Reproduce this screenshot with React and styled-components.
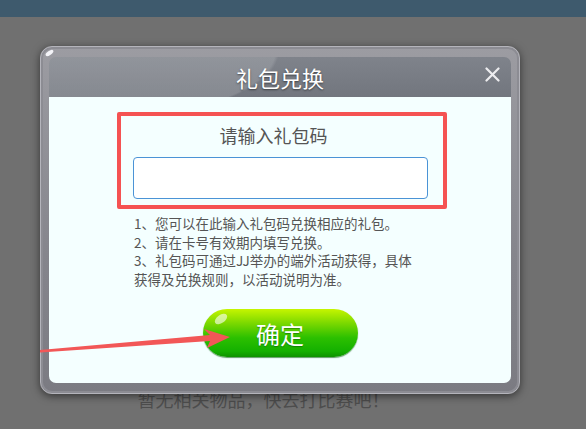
import React, { useState } from 'react';
import styled, { createGlobalStyle } from 'styled-components';

const GlobalStyle = createGlobalStyle`
  html, body {
    margin: 0;
    padding: 0;
    background: #707070;
  }
  body {
    font-family: "Noto Sans CJK SC", "Noto Sans", "Liberation Sans", sans-serif;
  }
`;

function GiftCodeDialog() {
  const [code, setCode] = useState('');

  return (
    <StPage>
      <StTopBar />
      <StEmptyText>暂无相关物品，快去打比赛吧！</StEmptyText>

      <StOverlay>
        <StFrame>
          <StHeader>
            <StTitle>礼包兑换</StTitle>
            <StClose aria-label="close">
              <svg width="15" height="15" viewBox="0 0 15 15">
                <path d="M1.5 1.5 L13.5 13.5 M13.5 1.5 L1.5 13.5" stroke="#ececef" strokeWidth="2.2" strokeLinecap="round" />
              </svg>
            </StClose>
          </StHeader>

          <StBody>
            <StCodeBox>
              <StCodeLabel>请输入礼包码</StCodeLabel>
              <StCodeInput value={code} onChange={(e) => setCode(e.target.value)} />
            </StCodeBox>

            <StNotes>
              <li>1、您可以在此输入礼包码兑换相应的礼包。</li>
              <li>2、请在卡号有效期内填写兑换。</li>
              <li>3、礼包码可通过JJ举办的端外活动获得，具体获得及兑换规则，以活动说明为准。</li>
            </StNotes>

            <StConfirm>确定</StConfirm>
          </StBody>
        </StFrame>
      </StOverlay>

      {/* 指向确定按钮的箭头 */}
      <StArrow width="586" height="429" viewBox="0 0 586 429">
        <polygon points="40,350 210,335 204,329 230,337 207,348 210,341 40,352.5" fill="#f25757" />
      </StArrow>
    </StPage>
  );
}

const StPage = styled.div`
  position: relative;
  width: 586px;
  height: 429px;
  overflow: hidden;
  background: #707070;
  display: flex;
  flex-direction: column;
  align-items: center;
`;

const StTopBar = styled.div`
  width: 100%;
  height: 17px;
  background: #3e5a6d;
`;

const StEmptyText = styled.div`
  margin-top: 370px;
  margin-right: 59px;
  font-size: 18px;
  line-height: 24px;
  color: #4d4d4d;
`;

const StOverlay = styled.div`
  position: absolute;
  left: 40px;
  top: 46px;
`;

const StFrame = styled.div`
  position: relative;
  width: 462px;
  padding: 10px 8px;
  border: 1px solid #b4b4bb;
  border-radius: 12px;
  background: linear-gradient(#9c9ca2, #85858c 60%, #7b7b82);
  box-shadow: 0 2px 8px rgba(0, 0, 0, 0.55), inset 0 0 0 2px #8c8c93;

  &::before {
    content: '';
    position: absolute;
    left: 4px;
    top: 4px;
    width: 9px;
    height: 4px;
    border-radius: 50%;
    background: #f4f4f8;
    transform: rotate(-35deg);
  }
`;

const StHeader = styled.div`
  position: relative;
  height: 40px;
  display: flex;
  align-items: center;
  justify-content: center;
  border-radius: 7px 7px 0 0;
  background:
    radial-gradient(ellipse 190px 70px at 40px -6px, rgba(255, 255, 255, 0.14) 98%, transparent 100%),
    linear-gradient(#7f838b, #72767e);
`;

const StTitle = styled.h2`
  margin: 0;
  font-size: 22px;
  font-weight: 400;
  color: #ffffff;
  text-shadow: 0 1px 2px rgba(0, 0, 0, 0.5);
`;

const StClose = styled.button`
  position: absolute;
  right: 11px;
  top: 10px;
  padding: 0;
  border: none;
  background: none;
  display: flex;
  cursor: pointer;
`;

const StBody = styled.div`
  height: 286px;
  box-sizing: border-box;
  padding-top: 15px;
  display: flex;
  flex-direction: column;
  align-items: center;
  border-radius: 0 0 7px 7px;
  background: #f4ffff;
`;

const StCodeBox = styled.div`
  width: 330px;
  height: 97px;
  box-sizing: border-box;
  margin-left: 4px;
  border: 4px solid #f55252;
  border-radius: 2px;
  display: flex;
  flex-direction: column;
  align-items: center;
`;

const StCodeLabel = styled.div`
  margin-top: 6px;
  margin-right: 17px;
  font-size: 18px;
  line-height: 26px;
  color: #555555;
`;

const StCodeInput = styled.input`
  width: 295px;
  height: 42px;
  box-sizing: border-box;
  margin-top: 9px;
  margin-right: 4px;
  border: 1px solid #4b93d6;
  border-radius: 4px;
  background: #ffffff;
  outline: none;
  font-size: 16px;
  padding: 0 8px;
`;

const StNotes = styled.ul`
  width: 286px;
  margin: 5px 6px 0 0;
  padding: 0;
  list-style: none;
  font-size: 13.5px;
  line-height: 18.5px;
  color: #555555;
`;

const StConfirm = styled.button`
  position: relative;
  width: 155px;
  height: 48px;
  margin-top: 21px;
  padding: 0;
  border: none;
  border-radius: 24px;
  font-family: inherit;
  font-size: 24px;
  color: #ffffff;
  text-shadow: 0 1px 1px rgba(0, 80, 0, 0.5);
  background: linear-gradient(#c6f500 0%, #7ad800 30%, #2cc000 60%, #14b000 88%, #0e9200 100%);
  box-shadow: 0 1px 1px rgba(0, 90, 0, 0.6);
  cursor: pointer;

  &::before {
    content: '';
    position: absolute;
    left: 11px;
    top: 6px;
    width: 14px;
    height: 8px;
    border-radius: 50%;
    background: rgba(255, 255, 255, 0.6);
    transform: rotate(-35deg);
  }
`;

const StArrow = styled.svg`
  position: absolute;
  left: 0;
  top: 0;
  pointer-events: none;
`;

export default function App() {
  return (
    <>
      <GlobalStyle />
      <GiftCodeDialog />
    </>
  );
}
